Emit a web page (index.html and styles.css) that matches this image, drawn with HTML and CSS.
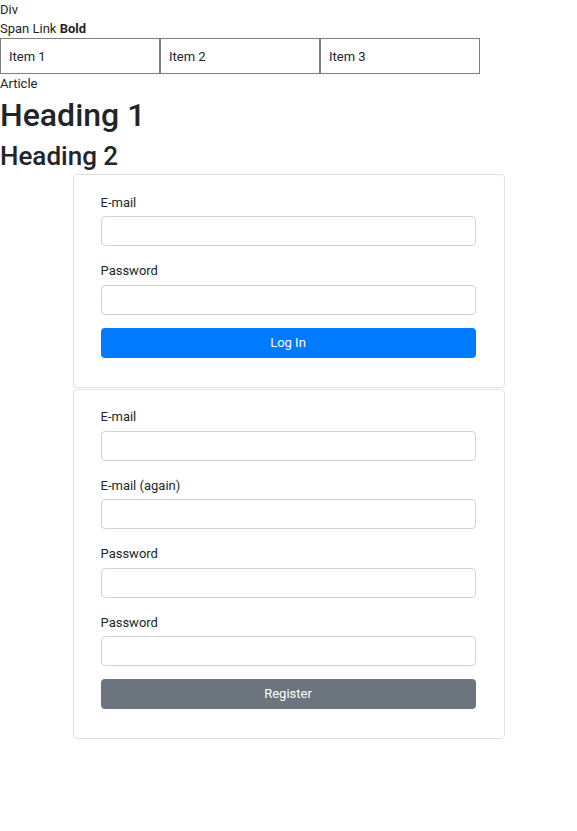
FILE: index.html
```html
<!DOCTYPE html>
<html lang="en">
<head>
<meta charset="utf-8">
<title>Forms</title>
<link rel="stylesheet" href="styles.css">
</head>
<body>
<div class="line">Div</div>
<div class="line"><span>Span</span> <a class="link" href="#">Link</a> <b>Bold</b></div>
<div class="items">
  <div class="item">Item 1</div>
  <div class="item">Item 2</div>
  <div class="item">Item 3</div>
</div>
<article class="line">Article</article>
<h1 class="h1">Heading 1</h1>
<h2 class="h2">Heading 2</h2>

<form class="card">
  <div class="group">
    <label class="label">E-mail</label>
    <input class="input" type="text">
  </div>
  <div class="group">
    <label class="label">Password</label>
    <input class="input" type="password">
  </div>
  <button class="btn btn-primary" type="button">Log In</button>
</form>

<form class="card">
  <div class="group">
    <label class="label">E-mail</label>
    <input class="input" type="text">
  </div>
  <div class="group">
    <label class="label">E-mail (again)</label>
    <input class="input" type="text">
  </div>
  <div class="group">
    <label class="label">Password</label>
    <input class="input" type="password">
  </div>
  <div class="group">
    <label class="label">Password</label>
    <input class="input" type="password">
  </div>
  <button class="btn btn-secondary" type="button">Register</button>
</form>
</body>
</html>
```
FILE: styles.css
```css
* { box-sizing: border-box; }
html, body { margin: 0; padding: 0; background: #fff; }
body {
  font-family: Roboto, "Open Sans", sans-serif;
  font-size: 13px;
  line-height: 19px;
  color: #212529;
}
.line { display: block; }
.link { color: #212529; text-decoration: none; }
b { font-weight: 700; }
.items { display: flex; }
.item {
  width: 160px;
  border: 1px solid #808080;
  padding: 7.5px 8px;
}
.h1 {
  margin: 0 0 3px;
  font-size: 32px;
  font-weight: 500;
  line-height: 44px;
}
.h2 {
  margin: 0 0 2px;
  font-size: 26px;
  font-weight: 500;
  line-height: 32px;
}
.card {
  width: 432px;
  margin: 0 auto;
  border: 1px solid #dee2e6;
  border-radius: 4px;
  padding: 17.5px 28px 29px 27px;
  display: flex;
  flex-direction: column;
  line-height: 19.5px;
}
.card + .card { margin-top: 1px; }
.group {
  display: flex;
  flex-direction: column;
  margin-bottom: 15px;
}
.group:last-of-type { margin-bottom: 13px; }
.label { margin-bottom: 4px; }
.input {
  height: 30px;
  border: 1px solid #ced4da;
  border-radius: 4px;
  background: #fff;
  font: inherit;
  padding: 0 8px;
}
.btn {
  height: 30px;
  border: 0;
  border-radius: 4px;
  color: #fff;
  font: inherit;
  cursor: pointer;
}
.btn-primary { background: #007bff; }
.btn-secondary { background: #6c757d; }
```
